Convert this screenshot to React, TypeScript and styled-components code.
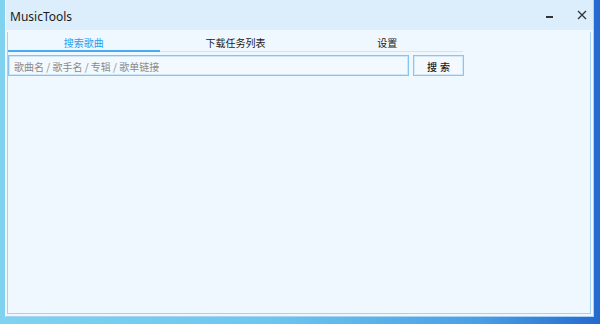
import styled, { createGlobalStyle } from "styled-components";

const GlobalStyle = createGlobalStyle`
  html, body {
    margin: 0;
    padding: 0;
  }
  body {
    font-family: "Noto Sans CJK SC", "Noto Sans", sans-serif;
  }
`;

const Desktop = styled.div`
  width: 600px;
  height: 324px;
  box-sizing: border-box;
  padding: 0 6px 7px 5px;
  display: flex;
  background: linear-gradient(90deg, #7fd3ef 0%, #6cc6ef 45%, #4a9ee4 80%, #2569cf 100%);
  overflow: hidden;
`;

const Window = styled.div`
  flex: 1;
  display: flex;
  flex-direction: column;
  border: 1px solid #a9d3f4;
  border-left-color: #ffffff;
  border-top: none;
  background: #eff7ff;
`;

const TitleBar = styled.div`
  height: 30px;
  flex-shrink: 0;
  display: flex;
  align-items: center;
  padding: 0 0 0 4px;
  background: #dcedfb;
`;

const Title = styled.div`
  flex: 1;
  font-family: "Noto Sans", sans-serif;
  font-size: 12px;
  color: #1a1a1a;
  padding-top: 2px;
`;

const WinButton = styled.div`
  width: 32px;
  height: 30px;
  display: flex;
  align-items: center;
  justify-content: flex-end;
  padding-right: 6px;
  box-sizing: border-box;
`;

const Body = styled.div`
  flex: 1;
  display: flex;
  padding: 2px 2px 2px 1px;
`;

const Panel = styled.div`
  flex: 1;
  border: 1px solid #a8d2f4;
  border-top: none;
  display: flex;
  flex-direction: column;
`;

const TabBar = styled.div`
  width: 455px;
  display: flex;
  border-bottom: 1px solid #d9e3ec;
`;

const Tab = styled.div<{ $active?: boolean }>`
  flex: 1;
  height: 16px;
  padding-top: 2px;
  display: flex;
  align-items: center;
  justify-content: center;
  font-size: 10px;
  color: ${(p) => (p.$active ? "#1e9ff0" : "#1a1a1a")};
  border-bottom: 2px solid ${(p) => (p.$active ? "#4aaaf0" : "transparent")};
  margin-bottom: -1px;
`;

const SearchRow = styled.div`
  display: flex;
  gap: 4px;
  margin-top: 3px;
  width: 456px;
`;

const SearchInput = styled.input`
  width: 401px;
  height: 21px;
  box-sizing: border-box;
  border: 1px solid #86c3ef;
  box-shadow: inset 0 0 0 1px #cde6fa;
  background: #f2f9ff;
  padding: 1px 5px 0;
  font-family: "Noto Sans CJK SC", sans-serif;
  font-size: 10px;
  outline: none;
  &::placeholder {
    color: #8a8a8a;
  }
`;

const SearchButton = styled.button`
  width: 51px;
  height: 21px;
  box-sizing: border-box;
  border: 1px solid #8cc6f0;
  box-shadow: inset 0 0 0 1px #d2e9fb;
  background: #f3f9ff;
  font-family: "Noto Sans CJK SC", sans-serif;
  font-size: 10px;
  font-weight: 500;
  letter-spacing: 3px;
  padding: 1px 0 0 3px;
  color: #1a1a1a;
`;

export default function App() {
  return (
    <Desktop>
      <GlobalStyle />
      <Window>
        <TitleBar>
          <Title>MusicTools</Title>
          <WinButton>
            <svg width="10" height="10" viewBox="0 0 10 10">
              <rect x="1" y="6" width="7" height="2" fill="#333" />
            </svg>
          </WinButton>
          <WinButton>
            <svg width="10" height="10" viewBox="0 0 10 10">
              <path d="M1 1 L9 9 M9 1 L1 9" stroke="#333" strokeWidth="1.3" />
            </svg>
          </WinButton>
        </TitleBar>
        <Body>
          <Panel>
            <TabBar>
              <Tab $active>搜索歌曲</Tab>
              <Tab>下载任务列表</Tab>
              <Tab>设置</Tab>
            </TabBar>
            <SearchRow>
              <SearchInput placeholder="歌曲名 / 歌手名 / 专辑 / 歌单链接" />
              <SearchButton>搜索</SearchButton>
            </SearchRow>
          </Panel>
        </Body>
      </Window>
    </Desktop>
  );
}
